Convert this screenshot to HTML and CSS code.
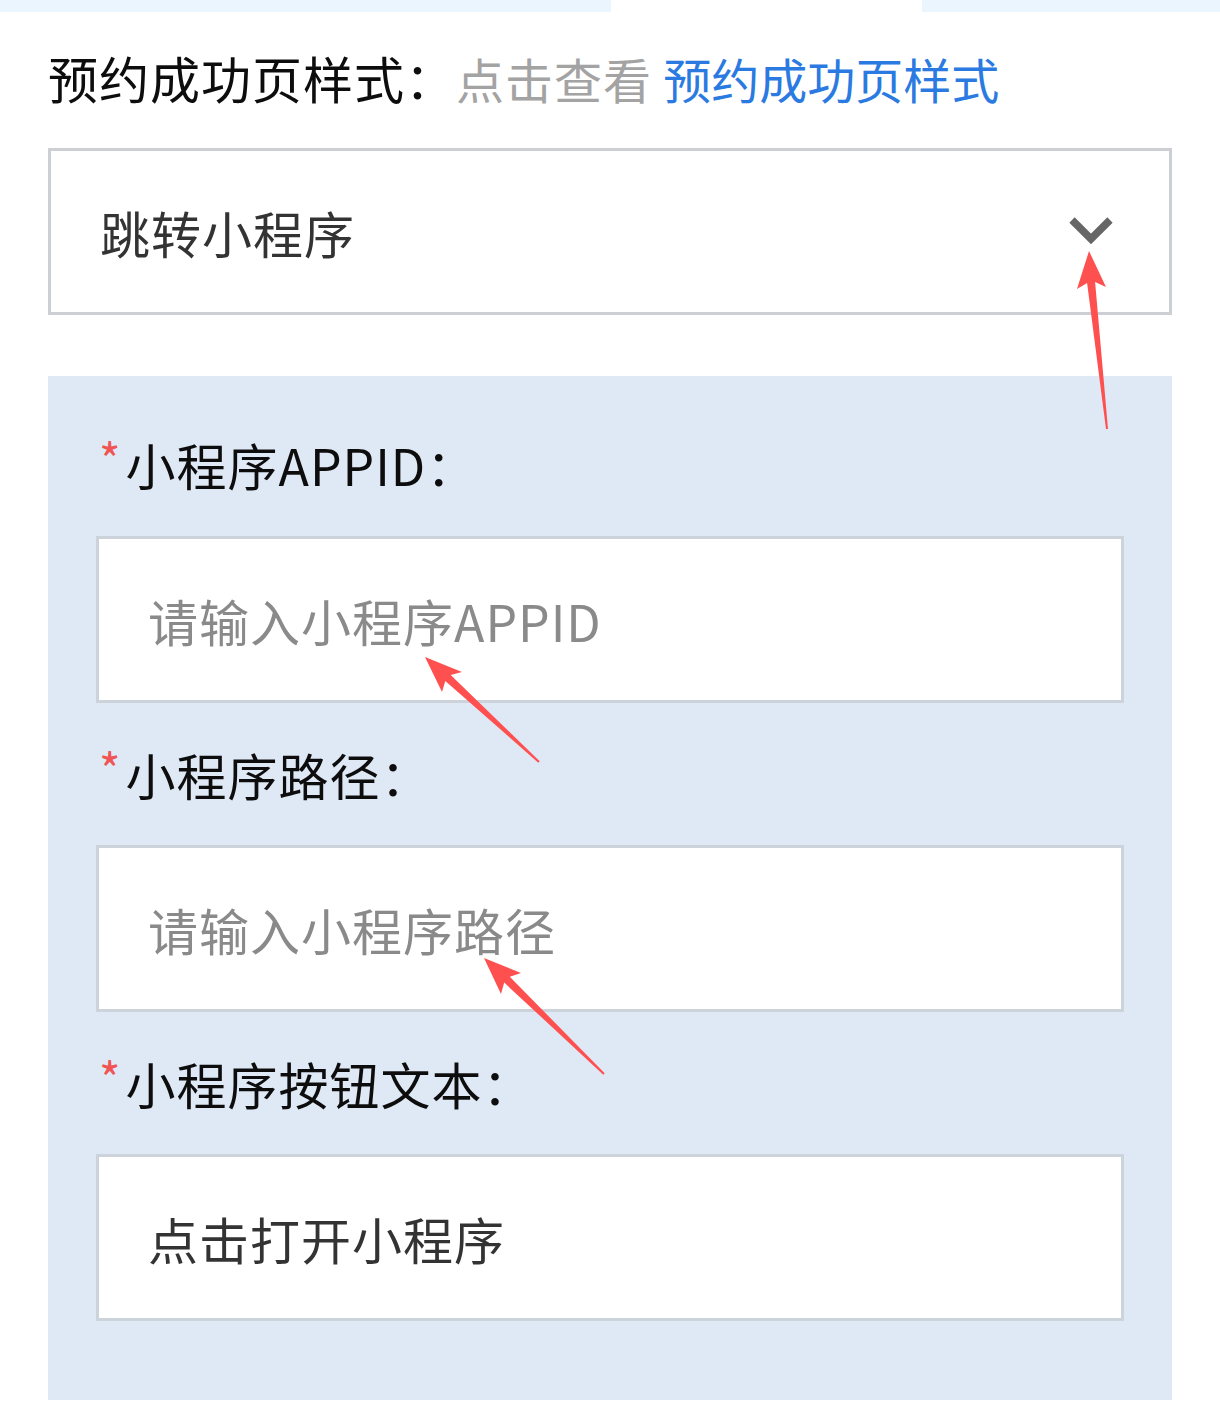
FILE: index.html
```html
<!DOCTYPE html>
<html lang="zh-CN">
<head>
<meta charset="utf-8">
<title>预约成功页样式</title>
<link rel="stylesheet" href="styles.css">
</head>
<body>
<div class="page">
  <div class="tabs">
    <div class="tab tab-left"></div>
    <div class="tab tab-mid"></div>
    <div class="tab tab-right"></div>
  </div>

  <div class="title-row">
    <span class="title-label">预约成功页样式：</span><span class="title-hint">点击查看</span> <span class="title-link">预约成功页样式</span>
  </div>

  <div class="select">
    <span class="select-text">跳转小程序</span>
    <svg class="chevron" width="48" height="30" viewBox="0 0 48 30"><polyline points="5,5 24,24 43,5" fill="none" stroke="#666666" stroke-width="7.5"/></svg>
  </div>

  <div class="panel">
    <div class="field-label first"><span class="req">*</span>小程序APPID：</div>
    <input class="field-input" type="text" placeholder="请输入小程序APPID">

    <div class="field-label"><span class="req">*</span>小程序路径：</div>
    <input class="field-input" type="text" placeholder="请输入小程序路径">

    <div class="field-label"><span class="req">*</span>小程序按钮文本：</div>
    <input class="field-input" type="text" value="点击打开小程序">
  </div>

  <svg class="annotations" width="1220" height="1401" viewBox="0 0 1220 1401">
    <polygon fill="#ff5050" points="1089,251 1106,287 1095.1,282.1 1108,428.9 1106,429.1 1087.1,282.9 1077,289"/>
    <polygon fill="#ff5050" points="425,657 462,672 450.7,675.1 539.7,761.3 538.3,762.7 445.3,680.9 442,692"/>
    <polygon fill="#ff5050" points="484,958 521,973 509.8,976.8 604.7,1073.3 603.3,1074.7 504.2,982.6 501,994"/>
  </svg>
</div>
</body>
</html>
```

FILE: styles.css
```css
* {
  box-sizing: border-box;
}

html, body {
  margin: 0;
  padding: 0;
  background: #ffffff;
}

body {
  font-family: "Noto Sans CJK SC", "Noto Sans", sans-serif;
  color: #111111;
}

.page {
  position: relative;
  width: 1220px;
  height: 1401px;
  overflow: hidden;
}

.tabs {
  display: flex;
  height: 12px;
}

.tab-left {
  width: 611px;
  background: #ebf5fe;
}

.tab-mid {
  width: 311px;
  background: #ffffff;
}

.tab-right {
  flex: 1;
  background: #ebf5fe;
}

.title-row {
  margin-top: 30px;
  padding-left: 48px;
  height: 70px;
  line-height: 70px;
  font-size: 50px;
  white-space: nowrap;
}

.title-label {
  color: #0d0d0d;
  letter-spacing: 1px;
}

.title-hint {
  color: #a3a3a3;
  font-size: 48px;
  letter-spacing: 1px;
}

.title-link {
  color: #2a7ae2;
  font-size: 48px;
}

.select {
  margin: 36px 48px 0 48px;
  height: 167px;
  border: 3px solid #ccd0d5;
  background: #ffffff;
  display: flex;
  align-items: center;
  justify-content: space-between;
  padding: 0 54px 0 49px;
}

.select-text {
  font-size: 50px;
  color: #333333;
  line-height: 70px;
  letter-spacing: 1px;
}

.chevron {
  display: block;
  margin-top: -3px;
}

.panel {
  margin: 61px 48px 0 48px;
  background: #dfe8f5;
  padding: 47px 48px 79px 48px;
}

.field-label {
  font-size: 50px;
  line-height: 70px;
  height: 70px;
  color: #0d0d0d;
  margin: 30px 0 42px 0;
  white-space: nowrap;
  letter-spacing: 1px;
}

.field-label.first {
  margin-top: 0;
  margin-bottom: 43px;
}

.req {
  color: #f05454;
  font-size: 46px;
  vertical-align: 8px;
  margin-left: 3px;
  margin-right: 5px;
  letter-spacing: 0;
}

.field-input {
  display: block;
  width: 100%;
  height: 167px;
  border: 3px solid #ccd3db;
  background: #ffffff;
  padding: 0 0 0 49px;
  font-family: "Noto Sans CJK SC", "Noto Sans", sans-serif;
  font-size: 50px;
  letter-spacing: 1px;
  color: #333333;
  outline: none;
  margin: 0;
}

.field-input::placeholder {
  color: #8a8a8a;
  opacity: 1;
}

.annotations {
  position: absolute;
  left: 0;
  top: 0;
  pointer-events: none;
}
```
